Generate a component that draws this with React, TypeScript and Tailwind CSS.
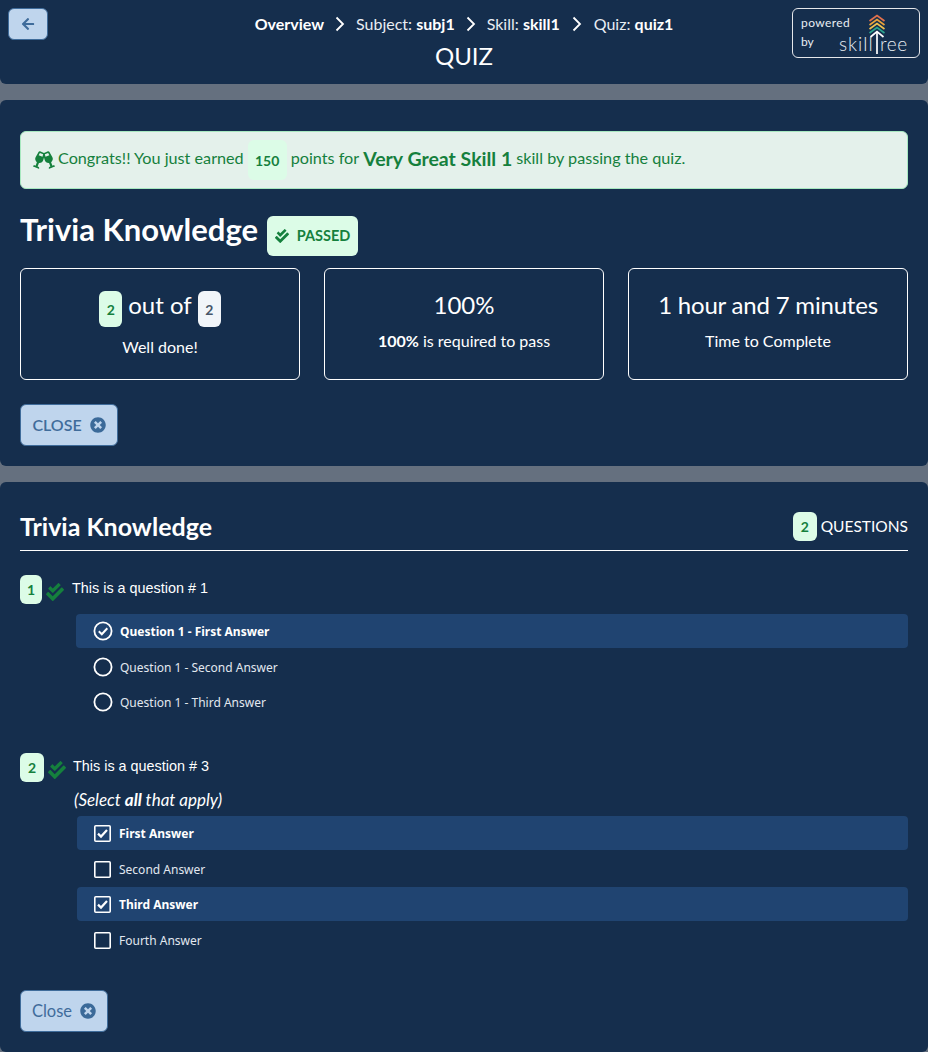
import React from "react";
import { FaArrowLeft, FaCheckDouble, FaGlassCheers, FaTimesCircle } from "react-icons/fa";

const sans = "font-['Lato',sans-serif]";

function Chevron({ className = "mx-[11px]" }: { className?: string }) {
  return (
    <svg width="10" height="16" viewBox="0 0 10 16" className={`shrink-0 ${className}`} fill="none" stroke="#ffffff" strokeWidth="1.8">
      <path d="M1.5 1.5 L8 8 L1.5 14.5" />
    </svg>
  );
}

function Badge({ children, className = "" }: { children: React.ReactNode; className?: string }) {
  return (
    <span className={`inline-flex items-center justify-center rounded-md bg-[#dcfce7] text-[#15803d] font-bold ${className}`}>
      {children}
    </span>
  );
}

function CloseButton({ label, className }: { label: string; className: string }) {
  return (
    <button className={`flex items-center justify-center gap-[8px] rounded-md border border-[#3f6c9b] bg-[#bfd5ed] text-[#3f6c9b] ${className}`}>
      {label}
      <FaTimesCircle size={16} color="#3b6a99" />
    </button>
  );
}

function Stat({ children, sub, className }: { children: React.ReactNode; sub: React.ReactNode; className: string }) {
  return (
    <div className={`flex h-[112px] flex-col items-center rounded-md border border-white text-white ${className}`}>
      {children}
      {sub}
    </div>
  );
}

function Radio({ checked, label, className }: { checked?: boolean; label: string; className: string }) {
  return (
    <div className={`flex items-center rounded font-['Noto_Sans',sans-serif] ${checked ? "bg-[#204471] font-bold text-white" : "text-[#e2e8f0]"} ${className}`}>
      <svg width="20" height="20" viewBox="0 0 20 20" className="ml-[17px] mr-[7px] shrink-0" fill="none" stroke="#ffffff" strokeWidth="1.8">
        <circle cx="10" cy="10" r="8.6" />
        {checked && <path d="M5.8 10.3 L8.8 13.2 L14.3 7.2" strokeWidth="2" />}
      </svg>
      <span className="pt-[2px] text-[12px]">{label}</span>
    </div>
  );
}

function Check({ checked, label, className }: { checked?: boolean; label: string; className: string }) {
  return (
    <div className={`flex items-center rounded font-['Noto_Sans',sans-serif] ${checked ? "bg-[#204471] font-bold text-white" : "text-[#e2e8f0]"} ${className}`}>
      <svg width="17" height="17" viewBox="0 0 17 17" className="ml-[17px] mr-[8px] shrink-0" fill="none" stroke="#ffffff" strokeWidth="1.6">
        <rect x="0.8" y="0.8" width="15.4" height="15.4" rx="1" />
        {checked && <path d="M4 8.6 L7 11.6 L13 5" strokeWidth="2.2" />}
      </svg>
      <span className="pt-[2px] text-[12px]">{label}</span>
    </div>
  );
}

function Logo() {
  return (
    <div className="relative h-[50px] w-[128px] rounded-md border border-[#e5e7eb] text-[#e8edf3]">
      <span className="absolute left-[8px] top-[5px] text-[12px] leading-[18px] tracking-[0.4px]">powered</span>
      <span className="absolute left-[8px] top-[24px] text-[12px] leading-[18px]">by</span>
      <svg width="18" height="40" viewBox="0 0 18 40" className="absolute left-[75px] top-[5px]" fill="none" strokeWidth="1.7">
        <path d="M1.5 7 L9 1.5 L16.5 7" stroke="#e2714d" />
        <path d="M1.5 11 L9 5.5 L16.5 11" stroke="#e9a23b" />
        <path d="M1.5 15 L9 9.5 L16.5 15" stroke="#efc14f" />
        <path d="M1.5 19 L9 13.5 L16.5 19" stroke="#2ba58f" />
        <path d="M2.5 23 L9 17.5 L15.5 23" stroke="#ffffff" />
        <path d="M9 18 L9 40" stroke="#ffffff" />
      </svg>
      <span className="absolute left-[46px] top-[22px] text-[19px] font-light leading-[26px] tracking-[1px]">skill</span>
      <span className="absolute left-[87px] top-[22px] text-[19px] font-light leading-[26px] tracking-[0.6px]">ree</span>
    </div>
  );
}

export default function App() {
  return (
    <div className={`${sans} flex h-[1052px] flex-col gap-[16px] overflow-hidden bg-[#65707f]`}>
      <header className="grid h-[84px] shrink-0 grid-cols-[128px_1fr_128px] rounded-b-md bg-[#152e4d] p-[8px] text-white">
        <button className="flex h-[32px] w-[40px] items-center justify-center rounded-md border border-[#3f6c9b] bg-[#bfd5ed]">
          <FaArrowLeft size={14} color="#3f6c9b" />
        </button>
        <div className="flex flex-col items-center">
          <div className="flex h-[32px] items-center text-[16px] text-[#e8edf3]">
            <span className="font-bold text-white">Overview</span>
            <Chevron />
            <span>Subject: <b className="text-white">subj1</b></span>
            <Chevron />
            <span>Skill: <b className="text-white">skill1</b></span>
            <Chevron className="mx-[12px]" />
            <span>Quiz: <b className="text-white">quiz1</b></span>
          </div>
          <h1 className="text-[24px] leading-[32px]">QUIZ</h1>
        </div>
        <Logo />
      </header>

      <section className="flex h-[366px] shrink-0 flex-col rounded-md bg-[#152e4d] px-[20px] pt-[31px]">
        <div className="flex h-[58px] items-center rounded-md border border-[#a7e8c0] bg-[#e4f1eb] pb-[3px] pl-[12px] text-[16.2px] text-[#15803d]">
          <FaGlassCheers size={22} className="mr-[3px] mt-[3px]" />
          <span>Congrats!! You just earned</span>
          <Badge className="mx-[4px] mt-[3px] h-[40px] w-[39px] text-[14px]">150</Badge>
          <span>points for</span>
          <b className="mx-[4px] text-[19.5px]">Very Great Skill 1</b>
          <span>skill by passing the quiz.</span>
        </div>
        <div className="mt-[27px] flex h-[40px] items-center">
          <h2 className="mb-[13px] text-[31px] font-bold text-white">Trivia Knowledge</h2>
          <Badge className="ml-[9px] h-[40px] w-[91px] gap-[8px] text-[14.5px]">
            <FaCheckDouble size={14} /> PASSED
          </Badge>
        </div>
        <div className="mt-[12px] grid grid-cols-3 gap-[24px]">
          <Stat className="pt-[22px]" sub={<p className="mt-[8px] text-[16px]">Well done!</p>}>
            <div className="flex h-[36px] items-center gap-[6px] text-[24px]">
              <Badge className="h-[36px] w-[23px] text-[14px]">2</Badge>
              <span className="mb-[9px]">out of</span>
              <span className="inline-flex h-[36px] w-[23px] items-center justify-center rounded-md bg-[#f1f5f9] text-[14px] font-bold text-[#475569]">2</span>
            </div>
          </Stat>
          <Stat className="pt-[18px]" sub={<p className="mt-[6px] text-[16px]"><b>100%</b> is required to pass</p>}>
            <div className="flex h-[36px] items-center text-[24px]">100%</div>
          </Stat>
          <Stat className="pt-[18px]" sub={<p className="mt-[6px] text-[16px]">Time to Complete</p>}>
            <div className="flex h-[36px] items-center text-[24px] tracking-[-0.2px]">1 hour and 7 minutes</div>
          </Stat>
        </div>
        <CloseButton label="CLOSE" className="mt-[24px] h-[42px] w-[98px] text-[16px] font-semibold" />
      </section>

      <section className="flex-1 rounded-md bg-[#152e4d] px-[20px] pt-[28px]">
        <div className="flex h-[41px] items-start justify-between border-b border-white text-white">
          <h2 className="text-[25px] font-bold leading-[32px]">Trivia Knowledge</h2>
          <div className="flex items-center gap-[4px] pt-[2px] text-[15.5px]">
            <Badge className="h-[29px] w-[24px] text-[14px]">2</Badge>
            QUESTIONS
          </div>
        </div>

        <div className="mt-[24px] flex items-start">
          <Badge className="h-[29px] w-[22px] text-[14px]">1</Badge>
          <FaCheckDouble size={18} color="#15803d" className="ml-[4px] mt-[8px]" />
          <span className="ml-[8px] font-['Liberation_Sans',sans-serif] text-[14.4px] leading-[26px] text-white">This is a question # 1</span>
        </div>
        <div className="ml-[56px] mt-[10px] flex flex-col">
          <Radio checked label="Question 1 - First Answer" className="h-[34px]" />
          <Radio label="Question 1 - Second Answer" className="mt-[2px] h-[34px]" />
          <Radio label="Question 1 - Third Answer" className="mt-[1px] h-[34px]" />
        </div>

        <div className="mt-[34px] flex items-start">
          <Badge className="h-[29px] w-[24px] text-[14px]">2</Badge>
          <FaCheckDouble size={18} color="#15803d" className="ml-[4px] mt-[8px]" />
          <span className="ml-[7px] font-['Liberation_Sans',sans-serif] text-[14.4px] leading-[26px] text-white">This is a question # 3</span>
        </div>
        <p className="ml-[54px] mt-[6px] text-[17px] italic leading-[24px] text-white">(Select <b>all</b> that apply)</p>
        <div className="ml-[57px] mt-[4px] flex flex-col">
          <Check checked label="First Answer" className="h-[34px]" />
          <Check label="Second Answer" className="mt-[2px] h-[34px]" />
          <Check checked label="Third Answer" className="mt-[1px] h-[34px]" />
          <Check label="Fourth Answer" className="mt-[2px] h-[34px]" />
        </div>
        <CloseButton label="Close" className="mt-[33px] h-[42px] w-[88px] text-[16.5px]" />
      </section>
    </div>
  );
}
